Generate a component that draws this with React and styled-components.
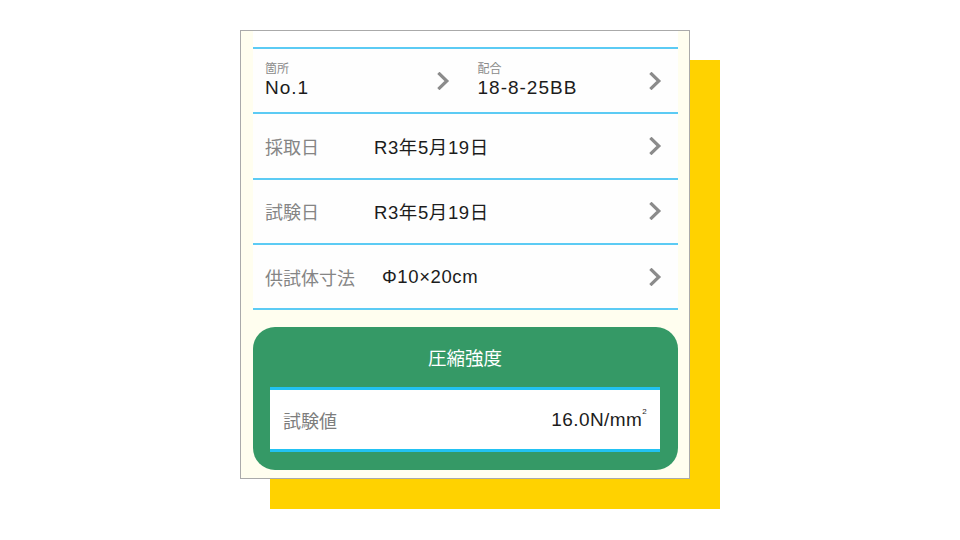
import React from "react";
import styled, { createGlobalStyle } from "styled-components";

const GlobalStyle = createGlobalStyle`
  html, body {
    margin: 0;
    padding: 0;
    background: #ffffff;
  }
  body {
    font-family: "Liberation Sans", "Noto Sans CJK JP", sans-serif;
  }
`;

const Page = styled.div`
  width: 960px;
  height: 540px;
  padding: 30px 0 0 240px;
  box-sizing: border-box;
`;

const Frame = styled.div`
  width: 450px;
  box-sizing: border-box;
  border: 1px solid #aaaaaa;
  background: #fffeef;
  box-shadow: 30px 30px 0 #ffd200;
  padding: 0 11px 8px 12px;
`;

const TopSpace = styled.div`
  height: 16px;
  background: #ffffff;
`;

const List = styled.div`
  background: #fefefe;
  border-bottom: 2px solid #5ccbf4;
`;

const Row = styled.div`
  height: 63.3px;
  border-top: 2px solid #5ccbf4;
  display: ${(p) => (p.$split ? "grid" : "flex")};
  grid-template-columns: 1fr 1fr;
  align-items: center;
  padding: ${(p) => (p.$split ? "0" : "0 16px 0 12px")};
`;

const Half = styled.div`
  height: 100%;
  display: flex;
  align-items: center;
  padding: 0 16px 0 12px;
`;

const Stack = styled.div`
  flex: 1;
  display: flex;
  flex-direction: column;
  padding-top: 1px;
`;

const SmallLabel = styled.span`
  font-size: 12px;
  color: #8a8a8a;
  line-height: 14px;
`;

const BigValue = styled.span`
  font-size: 19px;
  letter-spacing: 1px;
  color: #1c1c1c;
  line-height: 24px;
`;

const Label = styled.span`
  min-width: 82px;
  margin-right: 27px;
  font-size: 18px;
  color: #858585;
`;

const Value = styled.span`
  flex: 1;
  font-size: 18.5px;
  letter-spacing: 0.6px;
  color: #1c1c1c;
`;

const Gap = styled.div`
  height: 17px;
`;

const GreenCard = styled.div`
  background: #359966;
  border-radius: 22px;
  padding: 0 18px 18px 17px;
`;

const CardTitle = styled.div`
  height: 60px;
  display: flex;
  align-items: center;
  justify-content: center;
  color: #ffffff;
  font-size: 18.5px;
  box-sizing: border-box;
`;

const ResultBox = styled.div`
  height: 65px;
  box-sizing: border-box;
  background: #ffffff;
  border-top: 3px solid #22c2f2;
  border-bottom: 3px solid #22c2f2;
  display: flex;
  align-items: center;
  justify-content: space-between;
  padding: 0 13px;
`;

const ResultLabel = styled.span`
  font-size: 18px;
  color: #7d7d7d;
`;

const ResultValue = styled.span`
  font-size: 19px;
  letter-spacing: 0.4px;
  color: #1c1c1c;
`;

const Sup = styled.sup`
  font-size: 8px;
  vertical-align: top;
  position: relative;
  top: -2px;
`;

const Chevron = () => (
  <svg width="13" height="18" viewBox="0 0 13 18" style={{ flexShrink: 0 }}>
    <path
      d="M2.5 2 L9.8 9 L2.5 16"
      fill="none"
      stroke="#8b8b8b"
      strokeWidth="3.2"
      strokeLinecap="square"
      strokeLinejoin="miter"
    />
  </svg>
);

const detailRows = [
  { label: "採取日", value: "R3年5月19日" },
  { label: "試験日", value: "R3年5月19日" },
  { label: "供試体寸法", value: "Φ10×20cm" },
];

export default function App() {
  return (
    <>
      <GlobalStyle />
      <Page>
        <Frame>
          <TopSpace />
          <List>
            <Row $split>
              <Half>
                <Stack>
                  <SmallLabel>箇所</SmallLabel>
                  <BigValue>No.1</BigValue>
                </Stack>
                <Chevron />
              </Half>
              <Half>
                <Stack>
                  <SmallLabel>配合</SmallLabel>
                  <BigValue>18-8-25BB</BigValue>
                </Stack>
                <Chevron />
              </Half>
            </Row>
            {detailRows.map((row) => (
              <Row key={row.label}>
                <Label>{row.label}</Label>
                <Value>{row.value}</Value>
                <Chevron />
              </Row>
            ))}
          </List>
          <Gap />
          <GreenCard>
            <CardTitle>圧縮強度</CardTitle>
            <ResultBox>
              <ResultLabel>試験値</ResultLabel>
              <ResultValue>
                16.0N/mm<Sup>2</Sup>
              </ResultValue>
            </ResultBox>
          </GreenCard>
        </Frame>
      </Page>
    </>
  );
}
